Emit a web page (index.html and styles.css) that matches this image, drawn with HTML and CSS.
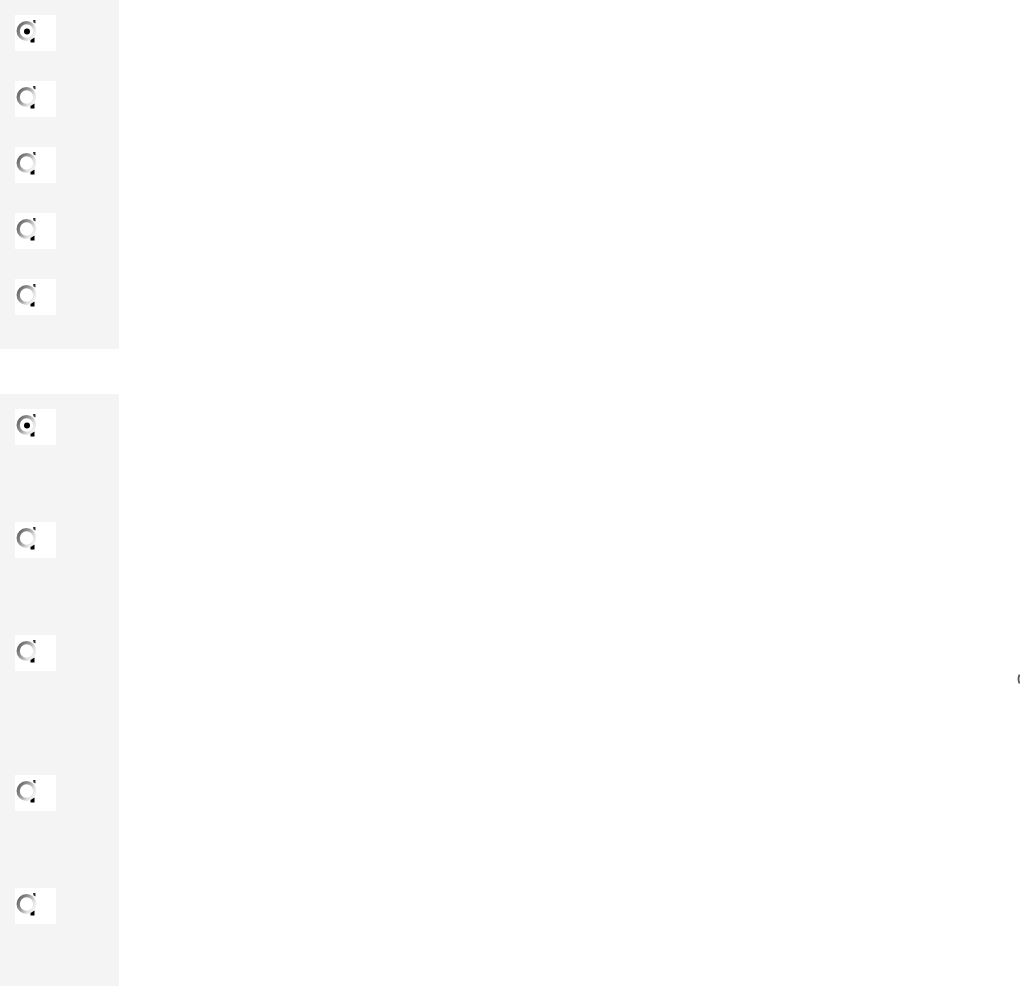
FILE: index.html
```html
<!DOCTYPE html>
<html>
<head>
<meta charset="utf-8">
<link rel="stylesheet" href="styles.css">
</head>
<body>
<div class="page">
  <div class="sidebar">
    <div class="panel panel-a">
      <div class="box"><svg class="radio" viewBox="0 0 24 26" width="24" height="26"><use href="#ring"/><circle cx="12" cy="12.5" r="3" fill="#000"/></svg></div>
      <div class="box"><svg class="radio" viewBox="0 0 24 26" width="24" height="26"><use href="#ring"/></svg></div>
      <div class="box"><svg class="radio" viewBox="0 0 24 26" width="24" height="26"><use href="#ring"/></svg></div>
      <div class="box"><svg class="radio" viewBox="0 0 24 26" width="24" height="26"><use href="#ring"/></svg></div>
      <div class="box"><svg class="radio" viewBox="0 0 24 26" width="24" height="26"><use href="#ring"/></svg></div>
    </div>
    <div class="panel panel-b">
      <div class="box"><svg class="radio" viewBox="0 0 24 26" width="24" height="26"><use href="#ring"/><circle cx="12" cy="12.5" r="3" fill="#000"/></svg></div>
      <div class="box"><svg class="radio" viewBox="0 0 24 26" width="24" height="26"><use href="#ring"/></svg></div>
      <div class="box"><svg class="radio" viewBox="0 0 24 26" width="24" height="26"><use href="#ring"/></svg></div>
      <div class="box tall-gap"><svg class="radio" viewBox="0 0 24 26" width="24" height="26"><use href="#ring"/></svg></div>
      <div class="box"><svg class="radio" viewBox="0 0 24 26" width="24" height="26"><use href="#ring"/></svg></div>
    </div>
  </div>
  <div class="main">
    <svg class="edge-mark" viewBox="0 0 3 10" width="3" height="10"><path d="M2.5 0.5 Q0.5 5 2.5 9.5" fill="none" stroke="#555" stroke-width="1.8"/></svg>
  </div>
</div>
<svg width="0" height="0" class="defs">
  <defs>
    <linearGradient id="rg" x1="0" y1="0.2" x2="1" y2="0.8">
      <stop offset="0" stop-color="#666"/>
      <stop offset="0.4" stop-color="#9a9a9a"/>
      <stop offset="0.75" stop-color="#e0e0e0"/>
      <stop offset="1" stop-color="#f4f4f4"/>
    </linearGradient>
    <g id="ring">
      <circle cx="11.5" cy="12" r="8.3" fill="#fff" stroke="url(#rg)" stroke-width="3.3"/>
      <path d="M18 1 L20.5 1 L20.5 4.5 L18.5 3.5 Z" fill="#333"/>
      <path d="M15.5 21 L19.5 18.5 L19.5 23.5 L15.5 23.5 Z" fill="#000"/>
    </g>
  </defs>
</svg>
</body>
</html>
```
FILE: styles.css
```css
html, body {
  margin: 0;
  padding: 0;
  background: #ffffff;
  font-family: "Liberation Sans", Arial, sans-serif;
}
.page {
  display: flex;
  width: 1021px;
  height: 986px;
  overflow: hidden;
}
.sidebar {
  width: 119px;
  display: flex;
  flex-direction: column;
  gap: 45px;
  flex-shrink: 0;
}
.panel {
  background: #f4f4f4;
  padding: 15px 0 0 15px;
  display: flex;
  flex-direction: column;
}
.panel-a {
  gap: 30px;
  padding-bottom: 34px;
}
.panel-b {
  gap: 77px;
  flex: 1;
}
.panel-b .tall-gap {
  margin-top: 27px;
}
.box {
  width: 41px;
  height: 36px;
  background: #ffffff;
  box-sizing: border-box;
  padding-top: 4px;
}
.radio {
  display: block;
}
.main {
  flex: 1;
  display: flex;
  justify-content: flex-end;
  align-items: flex-start;
  padding-top: 674px;
}
.edge-mark {
  display: block;
  margin-right: 1px;
}
.defs {
  position: absolute;
  width: 0;
  height: 0;
}
```
